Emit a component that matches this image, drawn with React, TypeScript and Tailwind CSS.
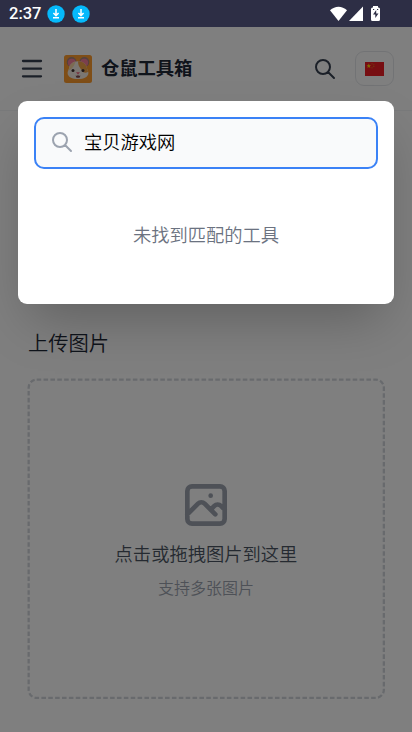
import { useState } from 'react';

const DownloadDot = () => (
  <svg className="w-[18px] h-[18px]" viewBox="0 0 18 18" fill="none">
    <circle cx="9" cy="9" r="8.7" fill="#05b9fb" />
    <path d="M9 4v6.300M6.400 8L9 10.600 11.600 8M6 12.800h6" stroke="#fff" strokeWidth="1.500" />
  </svg>
);

const SearchIcon = ({ className }: { className?: string }) => (
  <svg className={className} viewBox="0 0 24 24" fill="none" stroke="currentColor" strokeWidth={2} strokeLinecap="round" strokeLinejoin="round">
    <path d="M21 21l-6-6m2-5a7 7 0 11-14 0 7 7 0 0114 0z" />
  </svg>
);

const HamsterLogo = () => (
  <svg className="w-7 h-7" viewBox="0 0 28 28">
    <rect width="28" height="28" rx="2.5" fill="#ff9c2e" />
    <circle cx="7.6" cy="7" r="4.900" fill="#a8837b" />
    <circle cx="20.4" cy="7" r="4.900" fill="#a8837b" />
    <circle cx="7.8" cy="7.600" r="3.900" fill="#f77f9b" />
    <circle cx="20.2" cy="7.600" r="3.900" fill="#f77f9b" />
    <path d="M14 6.200c5.500 0 8.500 3.400 9 7 .3 1.900 1.400 2.700 1.400 4.700 0 3.900-4.600 6.100-10.400 6.100S3.600 21.800 3.600 17.900c0-2 1.100-2.800 1.400-4.700.5-3.600 3.500-7 9-7z" fill="#f6eee4" />
    <path d="M14 6.200c5.500 0 8.500 3.400 9 7 .2 1.300.8 2.300 1.100 3.500-2.300 1.900-5.500 1-6.300-1.200-.8-2.300-3.700-3.200-3.800-9.300z" fill="#f3a548" />
    <path d="M11.500 6.500c-3.500.8-6 3.400-6.500 6.700-.1.800-.4 1.500-.7 2.200 3.200-.7 6-4 7.200-8.900z" fill="#f8d6a4" />
    <circle cx="9" cy="15.500" r="1.500" fill="#40302f" />
    <circle cx="19" cy="15.500" r="1.500" fill="#40302f" />
    <path d="M12 17.300h4L14 19.500z" fill="#f0617f" />
    <path d="M11.500 20.500c1.200.6 2.500 0 2.500-1 0 1 1.300 1.600 2.500 1l-1 2.300h-3z" fill="#7f4b50" />
  </svg>
);

const ChinaFlag = () => (
  <svg className="w-[19px] h-[14px]" viewBox="0 0 19 14">
    <rect width="19" height="14" fill="#ef1c25" />
    <path d="M3.800 1.600l.7 1.600h1.600L4.800 4.300l.5 1.700-1.500-1-1.500 1 .5-1.700-1.300-1.100h1.600z" fill="#ffde00" />
    <path d="M6.500 1.500h1v.8h-1zM8.300 2.500h1v.8h-1zM8.300 4.300h1v.8h-1zM6.500 5.500h1v.8h-1z" fill="#d9a514" />
  </svg>
);

const StatusBar = () => (
  <div className="relative z-20 h-[27px] bg-[#2d2e45] flex items-center justify-between text-white">
    <div className="flex items-center pl-[9px]">
      <span className="font-[Roboto] font-medium text-[16.5px] w-[37.5px] leading-none pt-[2px]">2:37</span>
      <div className="flex gap-[7px]">
        <DownloadDot />
        <DownloadDot />
      </div>
    </div>
    <svg className="w-[52px] h-[16px] mr-[30px]" viewBox="0 0 52 16" fill="#fff">
      <path d="M0 4.300C5-.4 12-.4 17 4.300L8.500 15z" />
      <path d="M33 .5V15H19z" />
      <path d="M43 1.500V0h5v1.500h.5a1.500 1.500 0 011.500 1.500v10.500a1.500 1.500 0 01-1.500 1.500h-6a1.500 1.500 0 01-1.500-1.500V3a1.500 1.500 0 011.500-1.500z" />
      <path d="M46.200 4L43 8.500h2.300V12l3.200-4.500h-2.300zM43 3h1.200v1H43zM47 3h1.200v1H47z" fill="#2d2e45" />
    </svg>
  </div>
);

export default function App() {
  const [query, setQuery] = useState('宝贝游戏网');

  return (
    <div className="relative h-[732px] overflow-hidden bg-white font-['Noto_Sans_CJK_SC',sans-serif] font-[350]">
      <StatusBar />

      <header className="h-[84px] border-b border-[#f3f4f6] flex items-center justify-between px-[18px]">
        <div className="flex items-center">
          <button className="text-[#374151]">
            <svg className="w-[28px] h-[28px]" viewBox="0 0 28 28" fill="none" stroke="currentColor" strokeWidth={2.3} strokeLinecap="round">
              <path d="M5 6h18M5 13.700h18M5 21.300h18" />
            </svg>
          </button>
          <div className="flex items-center gap-[9px] ml-[18px]">
            <HamsterLogo />
            <h1 className="text-[18.3px] leading-[24px] pb-[4px] font-bold text-[#1f2937] whitespace-nowrap">仓鼠工具箱</h1>
          </div>
        </div>
        <div className="flex items-center gap-[18px]">
          <button className="text-[#374151]">
            <SearchIcon className="w-[24px] h-[24px]" />
          </button>
          <button className="w-[39px] h-[35px] rounded-[9px] border border-[#e5e7eb] flex items-center justify-center">
            <ChinaFlag />
          </button>
        </div>
      </header>

      <main className="px-[27px] pt-[214px]">
        <h2 className="pl-px text-[20.3px] leading-[34px] text-[#1f2937]">上传图片</h2>
        <div className="relative mt-[19px] h-[321px] flex flex-col items-center">
          {/* dashed outline of the drop area */}
          <svg className="absolute inset-0 w-full h-full" fill="none">
            <rect x="1.65" y="1.7" width="355.2" height="318.1" rx="8" stroke="#d1d5db" strokeWidth="2.3" strokeDasharray="4.6 2.27" />
          </svg>
          <svg className="w-[56px] h-[56px] mt-[98.500px] mt-[98.5px] text-[#9ca3af]" viewBox="0 0 24 24" fill="none" stroke="currentColor" strokeWidth={2} strokeLinecap="round" strokeLinejoin="round">
            <path d="M4 16l4.586-4.586a2 2 0 012.828 0L16 16m-2-2l1.586-1.586a2 2 0 012.828 0L20 14m-6-6h.01M6 20h12a2 2 0 002-2V6a2 2 0 00-2-2H6a2 2 0 00-2 2v12a2 2 0 002 2z" />
          </svg>
          <p className="mt-[6.5px] text-[18.3px] leading-7 text-[#4b5563]">点击或拖拽图片到这里</p>
          <p className="mt-[8px] text-[16px] leading-6 text-[#9ca3af]">支持多张图片</p>
        </div>
        <h2 className="pl-px mt-[25px] text-[20.3px] leading-[34px] text-[#1f2937]">上传图片</h2>
      </main>

      <div className="absolute inset-x-0 top-[27px] bottom-0 z-10 bg-black/50 px-[18px] pt-[74px]">
        <div className="h-[203px] bg-white rounded-[9px] shadow-2xl p-4">
          <div className="relative">
            <SearchIcon className="absolute left-[15.5px] top-[13px] w-[24px] h-[24px] text-[#9ca3af]" />
            <input
              type="text"
              className="w-full h-[52px] pl-[48px] pb-[4px] rounded-[10px] border-[2.3px] border-[#3b82f6] bg-[#f9fafb] text-[18.3px] text-black outline-none"
              value={query}
              onChange={(e) => setQuery(e.target.value)}
            />
          </div>
          <p className="mt-[51px] text-center text-[18.3px] leading-7 text-[#6b7280]">未找到匹配的工具</p>
        </div>
      </div>
    </div>
  );
}
